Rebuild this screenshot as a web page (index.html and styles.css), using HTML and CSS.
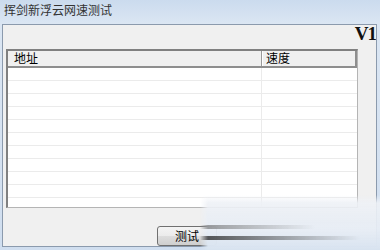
FILE: index.html
```html
<!DOCTYPE html>
<html lang="zh">
<head>
<meta charset="utf-8">
<title>挥剑新浮云网速测试</title>
<link rel="stylesheet" href="styles.css">
</head>
<body>
<div class="window">
  <div class="titlebar"><span class="title">挥剑新浮云网速测试</span></div>
  <div class="client">
    <div class="toprow"><span class="version">V1</span></div>
    <div class="list">
      <div class="header">
        <div class="hcell c1">地址</div>
        <div class="hcell c2">速度</div>
      </div>
      <div class="rows">
        <div class="row"><div class="cell c1"></div><div class="cell c2"></div></div>
        <div class="row"><div class="cell c1"></div><div class="cell c2"></div></div>
        <div class="row"><div class="cell c1"></div><div class="cell c2"></div></div>
        <div class="row"><div class="cell c1"></div><div class="cell c2"></div></div>
        <div class="row"><div class="cell c1"></div><div class="cell c2"></div></div>
        <div class="row"><div class="cell c1"></div><div class="cell c2"></div></div>
        <div class="row"><div class="cell c1"></div><div class="cell c2"></div></div>
        <div class="row"><div class="cell c1"></div><div class="cell c2"></div></div>
        <div class="row"><div class="cell c1"></div><div class="cell c2"></div></div>
        <div class="row"><div class="cell c1"></div><div class="cell c2"></div></div>
        <div class="row"><div class="cell c1"></div><div class="cell c2"></div></div>
      </div>
    </div>
    <div class="btnrow"><button class="btn">测试</button></div>
  </div>
  <div class="watermark"></div>
</div>
</body>
</html>
```

FILE: styles.css
```css
* { box-sizing: border-box; }
html, body { margin: 0; padding: 0; }
body {
  width: 380px;
  height: 250px;
  overflow: hidden;
  background: #d3e1f1;
  font-family: "Noto Sans CJK SC", "Noto Sans", sans-serif;
}
.window {
  position: relative;
  width: 380px;
  height: 250px;
  display: flex;
  flex-direction: column;
  background: linear-gradient(to bottom, #cbdbee 0, #dbe6f3 24px, #d0deef 100%);
}
.titlebar {
  height: 24px;
  display: flex;
  align-items: center;
  padding-left: 4px;
  padding-bottom: 4px;
}
.title {
  font-size: 12px;
  line-height: 14px;
  color: #333;
}
.client {
  flex: 1;
  margin: 0 3px 3px 2px;
  background: #f0f0f0;
  border: 1px solid #8b9aad;
  overflow: hidden;
  display: flex;
  flex-direction: column;
}
.toprow {
  height: 24px;
  display: flex;
  justify-content: flex-end;
  align-items: flex-start;
}
.version {
  font-family: "Liberation Serif", serif;
  font-weight: bold;
  font-size: 19px;
  line-height: 19px;
  margin-top: -1px;
  margin-right: 0;
  letter-spacing: -1px;
  color: #111;
}
.list {
  margin-left: 3px;
  width: 352px;
  height: 161px;
  border-style: solid;
  border-width: 2px 1px 1px 2px;
  border-color: #808080 #b4b4b4 #b4b4b4 #808080;
  background: #fff;
  overflow: hidden;
}
.header {
  display: flex;
  height: 17px;
  background: #f0f0f0;
  border-bottom: 2px solid #8e8e8e;
  border-right: 2px solid #8e8e8e;
}
.hcell {
  font-size: 12px;
  line-height: 14px;
  color: #000;
}
.hcell.c1 {
  width: 254px;
  padding-left: 6px;
  border-right: 1px solid #9a9a9a;
}
.hcell.c2 {
  flex: 1;
  padding-left: 3px;
  border-left: 1px solid #ffffff;
}
.rows {
  display: flex;
  flex-direction: column;
}
.row {
  display: flex;
  height: 13px;
  flex-shrink: 0;
  border-bottom: 1px solid #ebebeb;
}
.cell.c1 {
  width: 254px;
  border-right: 1px solid #ebebeb;
}
.cell.c2 { flex: 1; }
.btnrow {
  margin-top: 14px;
  padding-left: 154px;
}
.btn {
  width: 60px;
  height: 20px;
  padding: 0;
  border: 1px solid #707070;
  border-radius: 3px;
  background: linear-gradient(to bottom, #f4f4f4 0, #ebebeb 50%, #dddddd 50%, #cfcfcf 100%);
  font-family: "Noto Sans CJK SC", "Noto Sans", sans-serif;
  font-size: 12px;
  line-height: 16px;
  color: #000;
}
.watermark {
  position: absolute;
  left: 200px;
  top: 195px;
  width: 180px;
  height: 55px;
  background: linear-gradient(to bottom, rgba(238, 241, 246, 0) 0, rgba(238, 241, 246, 0.9) 8px, rgba(230, 236, 244, 0.95) 35px, #d8e3f0 55px);
  -webkit-mask-image: linear-gradient(to right, transparent 0, #000 8px);
  mask-image: linear-gradient(to right, transparent 0, #000 8px);
}
.watermark::before {
  content: "";
  position: absolute;
  left: 0;
  top: 30px;
  width: 115px;
  height: 4px;
  background: linear-gradient(to right, rgba(90, 90, 90, 0.6), rgba(150, 150, 150, 0));
  filter: blur(0.6px);
}
.watermark::after {
  content: "";
  position: absolute;
  left: 0;
  top: 41px;
  width: 160px;
  height: 4px;
  background: linear-gradient(to right, rgba(40, 40, 40, 0.8), rgba(120, 120, 120, 0));
  filter: blur(0.6px);
}
```
